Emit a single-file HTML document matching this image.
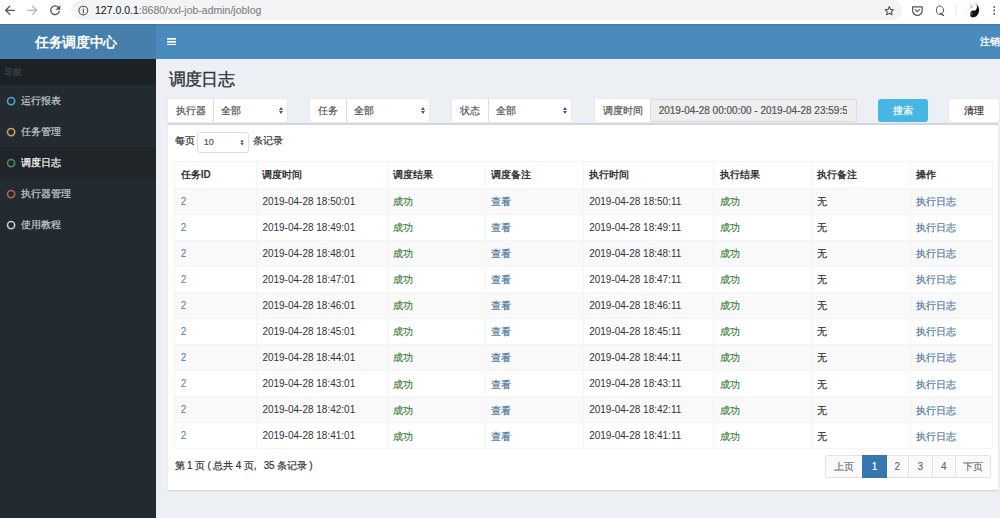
<!DOCTYPE html>
<html><head><meta charset="utf-8">
<style>
*{box-sizing:border-box;margin:0;padding:0}
html,body{width:1000px;height:518px;overflow:hidden;background:#fff}
body{font-family:"Liberation Sans",sans-serif;font-size:10px;color:#333;position:relative;-webkit-text-stroke-width:0.2px}
.abs{position:absolute}
/* chrome */
#chrome{left:0;top:0;width:1000px;height:24px;background:#fff}
#url{left:71px;top:0px;width:831px;height:19.5px;border-radius:10px;background:#f3f4f5}
#urltext{left:95px;top:4px;font-size:10.5px;line-height:12px;color:#808080;white-space:nowrap;-webkit-text-stroke-width:0.1px}
#urltext b{font-weight:normal;color:#222}
/* header */
#logo{left:0;top:24px;width:156px;height:35px;background:#467fac;color:#fff;font-weight:bold;font-size:14px;letter-spacing:-0.4px;line-height:37px;text-align:center;padding-right:4px;-webkit-text-stroke-width:0}
#navbar{left:156px;top:24px;width:844px;height:35px;background:#4a8bbd}
#logout{left:979.8px;top:35px;color:#fff;font-size:10px;line-height:14px;white-space:nowrap;-webkit-text-stroke-width:0.35px}
/* sidebar */
#sidebar{left:0;top:59px;width:156px;height:459px;background:#232a30}
#sbhead{left:0;top:59px;width:156px;height:26px;background:#1b2125;color:#46535a;font-size:9px;-webkit-text-stroke-width:0;line-height:26px;padding-left:4px}
.mi{left:0;width:156px;height:31px;line-height:31px;color:#c0cbd0;-webkit-text-stroke:0.2px #c0cbd0;font-size:10px;padding-left:21px}
.mi svg{position:absolute;left:6px;top:10.5px;width:10px;height:10px}
.mi.act{background:#1f2529;color:#fff;-webkit-text-stroke:0.2px #fff}
/* content */
#content{left:156px;top:59px;width:844px;height:459px;background:#ecf0f5}
#title{left:168.5px;top:69.5px;font-size:17px;letter-spacing:-0.6px;line-height:20px;color:#333;-webkit-text-stroke:0.35px #333}
.ig{top:98.5px;height:23.5px;background:#fff}
.addon{height:23.5px;line-height:23.5px;background:#fff;color:#555;text-align:center;border-right:1px solid #e8e8e8}
.sel{height:23.5px;line-height:23.5px;color:#555;padding-left:6px}
#box{left:167.5px;top:122.5px;width:830.5px;height:367.5px;background:#fff;border-top:2px solid #d2d6de;box-shadow:0 1px 1px rgba(0,0,0,.1)}

.ig{position:absolute;top:98.5px;height:23.2px;box-shadow:0 0 0 0.5px #e2e4e8;border-radius:0 3px 3px 0}
.addon{position:absolute;top:0;height:100%;background:#fff;color:#555;text-align:center;padding-left:1px;font-size:10px;line-height:23px;border-right:1px solid #dcdcdc}
.sel{position:absolute;top:0;height:100%;background:#fff;color:#555;font-size:10px;line-height:23px;border-radius:0 3px 3px 0;padding-left:7px}
.arr{position:absolute;right:3px;top:8px;width:5px;height:8px}
.arr:before{content:"";position:absolute;left:0;top:0;border-left:2.5px solid transparent;border-right:2.5px solid transparent;border-bottom:3.2px solid #555}
.arr:after{content:"";position:absolute;left:0;top:4.4px;border-left:2.5px solid transparent;border-right:2.5px solid transparent;border-top:3.2px solid #555}
#dt{position:absolute;left:56px;top:0;width:206px;height:100%;background:#eee;color:#555;font-size:10px;line-height:21px;padding-left:8px;white-space:nowrap;overflow:hidden;border:1px solid #dcdcdc;border-left:0}
#dt span{display:block;width:188px;overflow:hidden}
.btn{position:absolute;top:98.5px;height:23.5px;font-size:10px;line-height:23.5px;text-align:center;border-radius:3px}
#len{left:197.3px;top:132px;width:52.2px;height:20.5px;border:1px solid #ddd;border-radius:3px;background:#fff;font-size:9px;line-height:18.5px;padding-left:5.5px;color:#555}
#len .arr{right:3px;top:5.5px;transform:scale(0.85)}
#lenl{left:174.5px;top:134px;font-size:10px;line-height:14px;color:#333}
#lenr{left:253px;top:134px;font-size:10px;line-height:14px;color:#333}
table{position:absolute;left:174.3px;top:160.5px;width:818px;border-collapse:collapse;table-layout:fixed}
td,th{border:1px solid #f4f4f4;padding:0 5px 0 5.4px;font-size:10px;text-align:left;white-space:nowrap;overflow:hidden}
th{height:27px;font-weight:bold;color:#333;-webkit-text-stroke-width:0}
td{height:26.1px;color:#333;-webkit-text-stroke-width:0}
tr.odd td{background:#f9f9f9}
td.lk{color:#557c9e}
td.ok{color:#468742}
#info{left:174.5px;top:459px;font-size:10px;line-height:14px;color:#333;white-space:nowrap;letter-spacing:-0.14px}
#pg{left:824.8px;top:455.2px;height:22.8px;width:167px}
#pg div{position:absolute;top:0;height:100%;border:1px solid #e2e2e2;background:#fafafa;color:#666;-webkit-text-stroke-width:0.1px;font-size:10px;line-height:21px;text-align:center}
#pg div.a{background:#3677b0;border-color:#3677b0;color:#fff;z-index:1}
.c{position:relative;top:0.8px;-webkit-text-stroke-width:0.2px}
</style></head><body>
<div id="chrome" class="abs"></div>
<div id="url" class="abs"></div>
<div id="urltext" class="abs"><b>127.0.0.1</b>:8680/xxl-job-admin/joblog</div>

<div id="logo" class="abs">任务调度中心</div>
<div id="navbar" class="abs"></div>
<div id="logout" class="abs">注销</div>
<div class="abs" style="left:0;top:24px;width:1000px;height:1px;background:rgba(40,50,60,0.18)"></div>

<div id="sidebar" class="abs"></div>
<div id="sbhead" class="abs">导航</div>
<div class="mi abs" style="top:85px"><svg viewBox="0 0 10 10"><circle cx="5.1" cy="5.1" r="3.6" fill="none" stroke="#53a3c2" stroke-width="1.6"/></svg>运行报表</div>
<div class="mi abs" style="top:116px"><svg viewBox="0 0 10 10"><circle cx="5.1" cy="5.1" r="3.6" fill="none" stroke="#c9a062" stroke-width="1.6"/></svg>任务管理</div>
<div class="mi abs act" style="top:147px"><svg viewBox="0 0 10 10"><circle cx="5.1" cy="5.1" r="3.6" fill="none" stroke="#4c8a62" stroke-width="1.6"/></svg>调度日志</div>
<div class="mi abs" style="top:178px"><svg viewBox="0 0 10 10"><circle cx="5.1" cy="5.1" r="3.6" fill="none" stroke="#b9625a" stroke-width="1.6"/></svg>执行器管理</div>
<div class="mi abs" style="top:209px"><svg viewBox="0 0 10 10"><circle cx="5.1" cy="5.1" r="3.6" fill="none" stroke="#c9c9c9" stroke-width="1.6"/></svg>使用教程</div>

<div id="content" class="abs"></div>
<div id="title" class="abs">调度日志</div>

<div id="box" class="abs"></div>

<div class="ig" style="left:167.6px;width:119.4px"><div class="addon" style="left:0;width:46.6px">执行器</div><div class="sel" style="left:46.6px;width:72.8px">全部<i class="arr"></i></div></div>
<div class="ig" style="left:309.8px;width:119.3px"><div class="addon" style="left:0;width:37.1px">任务</div><div class="sel" style="left:37.1px;width:82.2px">全部<i class="arr"></i></div></div>
<div class="ig" style="left:451.9px;width:119.1px"><div class="addon" style="left:0;width:37.1px">状态</div><div class="sel" style="left:37.1px;width:82px">全部<i class="arr"></i></div></div>
<div class="ig" style="left:594.7px;width:261.8px"><div class="addon" style="left:0;width:56px">调度时间</div><div id="dt"><span>2019-04-28 00:00:00 - 2019-04-28 23:59:59</span></div></div>
<div class="btn abs" style="left:878px;width:50px;background:#48b6e2;color:#fff">搜索</div>
<div class="btn abs" style="left:948.7px;width:50px;background:#fff;color:#333;box-shadow:0 0 0 0.5px #e2e4e8">清理</div>
<div id="lenl" class="abs">每页</div>
<div id="len" class="abs">10<i class="arr"></i></div>
<div id="lenr" class="abs">条记录</div>
<table>
<colgroup><col style="width:81.7px"><col style="width:130.6px"><col style="width:98px"><col style="width:98.2px"><col style="width:130.4px"><col style="width:97.8px"><col style="width:99px"><col style="width:82.3px"></colgroup>
<thead><tr><th>任务ID</th><th>调度时间</th><th>调度结果</th><th>调度备注</th><th>执行时间</th><th>执行结果</th><th>执行备注</th><th>操作</th></tr></thead>
<tbody>
<tr class="odd"><td class="lk">2</td><td>2019-04-28 18:50:01</td><td class="ok"><span class="c">成功</span></td><td class="lk"><span class="c">查看</span></td><td>2019-04-28 18:50:11</td><td class="ok"><span class="c">成功</span></td><td><span class="c">无</span></td><td class="lk"><span class="c">执行日志</span></td></tr>
<tr class="even"><td class="lk">2</td><td>2019-04-28 18:49:01</td><td class="ok"><span class="c">成功</span></td><td class="lk"><span class="c">查看</span></td><td>2019-04-28 18:49:11</td><td class="ok"><span class="c">成功</span></td><td><span class="c">无</span></td><td class="lk"><span class="c">执行日志</span></td></tr>
<tr class="odd"><td class="lk">2</td><td>2019-04-28 18:48:01</td><td class="ok"><span class="c">成功</span></td><td class="lk"><span class="c">查看</span></td><td>2019-04-28 18:48:11</td><td class="ok"><span class="c">成功</span></td><td><span class="c">无</span></td><td class="lk"><span class="c">执行日志</span></td></tr>
<tr class="even"><td class="lk">2</td><td>2019-04-28 18:47:01</td><td class="ok"><span class="c">成功</span></td><td class="lk"><span class="c">查看</span></td><td>2019-04-28 18:47:11</td><td class="ok"><span class="c">成功</span></td><td><span class="c">无</span></td><td class="lk"><span class="c">执行日志</span></td></tr>
<tr class="odd"><td class="lk">2</td><td>2019-04-28 18:46:01</td><td class="ok"><span class="c">成功</span></td><td class="lk"><span class="c">查看</span></td><td>2019-04-28 18:46:11</td><td class="ok"><span class="c">成功</span></td><td><span class="c">无</span></td><td class="lk"><span class="c">执行日志</span></td></tr>
<tr class="even"><td class="lk">2</td><td>2019-04-28 18:45:01</td><td class="ok"><span class="c">成功</span></td><td class="lk"><span class="c">查看</span></td><td>2019-04-28 18:45:11</td><td class="ok"><span class="c">成功</span></td><td><span class="c">无</span></td><td class="lk"><span class="c">执行日志</span></td></tr>
<tr class="odd"><td class="lk">2</td><td>2019-04-28 18:44:01</td><td class="ok"><span class="c">成功</span></td><td class="lk"><span class="c">查看</span></td><td>2019-04-28 18:44:11</td><td class="ok"><span class="c">成功</span></td><td><span class="c">无</span></td><td class="lk"><span class="c">执行日志</span></td></tr>
<tr class="even"><td class="lk">2</td><td>2019-04-28 18:43:01</td><td class="ok"><span class="c">成功</span></td><td class="lk"><span class="c">查看</span></td><td>2019-04-28 18:43:11</td><td class="ok"><span class="c">成功</span></td><td><span class="c">无</span></td><td class="lk"><span class="c">执行日志</span></td></tr>
<tr class="odd"><td class="lk">2</td><td>2019-04-28 18:42:01</td><td class="ok"><span class="c">成功</span></td><td class="lk"><span class="c">查看</span></td><td>2019-04-28 18:42:11</td><td class="ok"><span class="c">成功</span></td><td><span class="c">无</span></td><td class="lk"><span class="c">执行日志</span></td></tr>
<tr class="even"><td class="lk">2</td><td>2019-04-28 18:41:01</td><td class="ok"><span class="c">成功</span></td><td class="lk"><span class="c">查看</span></td><td>2019-04-28 18:41:11</td><td class="ok"><span class="c">成功</span></td><td><span class="c">无</span></td><td class="lk"><span class="c">执行日志</span></td></tr>
</tbody></table>
<div id="info" class="abs">第 1 页 ( 总共 4 页<span style="display:inline-block;width:10px">,</span>35 条记录 )</div>
<div id="pg" class="abs"><div style="left:0.0px;width:38.5px;border-radius:3px 0 0 3px">上页</div><div class="a" style="left:37.5px;width:24.4px">1</div><div style="left:60.9px;width:23.2px">2</div><div style="left:83.1px;width:24.8px">3</div><div style="left:106.9px;width:24.2px">4</div><div style="left:130.1px;width:36.6px;border-radius:0 3px 3px 0">下页</div></div>

<svg class="abs" style="left:0;top:0" width="1000" height="24" viewBox="0 0 1000 24">
<g fill="none" stroke-linecap="round" stroke-linejoin="round">
<path d="M14.3 10.3H5.8M9.8 6.3L5.6 10.3L9.8 14.4" stroke="#555" stroke-width="1.3"/>
<path d="M27.7 10.3H36.4M32.5 6.3L36.6 10.3L32.5 14.4" stroke="#b5b5b5" stroke-width="1.3"/>
<path d="M59.2 11.3A4.3 4.3 0 1 1 58.4 7.6" stroke="#555" stroke-width="1.3"/>
<path d="M60 5.9V9.6H56.3Z" fill="#555" stroke="#555" stroke-width="0.6"/>
<circle cx="83.3" cy="10.6" r="4.4" stroke="#555" stroke-width="1.1"/>
<path d="M83.3 9.6V13" stroke="#555" stroke-width="1.1"/>
<circle cx="83.3" cy="8" r="0.5" fill="#555" stroke="none"/>
<path d="M889.3 6.6L890.6 9.4L893.6 9.7L891.4 11.7L892 14.7L889.3 13.2L886.6 14.7L887.2 11.7L885 9.7L888 9.4Z" stroke="#555" stroke-width="1.1"/>
<path d="M912.6 6.8H922.2V10.6A4.8 4.8 0 0 1 912.6 10.6Z" stroke="#555" stroke-width="1.2"/>
<path d="M915.3 9.6L917.4 11.7L919.5 9.6" stroke="#555" stroke-width="1.2"/>
<ellipse cx="940" cy="10.2" rx="3.6" ry="4.2" stroke="#555" stroke-width="1"/>
<path d="M940.6 13.4L943.5 15.6" stroke="#444" stroke-width="1.2"/>
<path d="M956 5.5V15" stroke="#ddd" stroke-width="0.8"/>
</g>
<circle cx="973.4" cy="10.8" r="7.4" fill="none" stroke="#f0f0f0" stroke-width="0.8"/>
<g transform="translate(973.6 10.6) rotate(10) scale(5.5 6.8)"><path d="M0 -1A1 1 0 0 1 0 1A0.5 0.5 0 0 1 0 0A0.5 0.5 0 0 0 0 -1Z" fill="#111"/></g>
<circle cx="971.6" cy="6.6" r="1.1" fill="none" stroke="#999" stroke-width="0.7"/>
<path d="M971.4 12.5L972.3 15" stroke="#888" stroke-width="0.9"/>
<circle cx="994.2" cy="7" r="0.9" fill="#555"/>
<circle cx="994.2" cy="10.5" r="0.9" fill="#555"/>
<circle cx="994.2" cy="14" r="0.9" fill="#555"/>
</svg>
<svg class="abs" style="left:166.8px;top:37.6px" width="9.4" height="7.6" viewBox="0 0 9.4 7.6"><rect x="0" y="0" width="9.4" height="1.7" fill="#fff"/><rect x="0" y="2.95" width="9.4" height="1.7" fill="#fff"/><rect x="0" y="5.9" width="9.4" height="1.7" fill="#fff"/></svg>

</body></html>
